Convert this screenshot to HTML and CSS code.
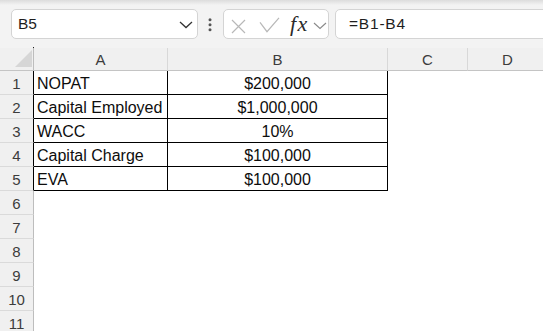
FILE: index.html
```html
<!DOCTYPE html>
<html>
<head>
<meta charset="utf-8">
<link rel="stylesheet" href="styles.css">
</head>
<body>
<div class="toolbar">
  <div class="namebox">
    <span class="name">B5</span>
    <svg class="chev" width="14" height="8" viewBox="0 0 14 8"><polyline points="1,1 7,6.5 13,1" fill="none" stroke="#333" stroke-width="1.3"/></svg>
  </div>
  <div class="dots">
    <svg width="4" height="14" viewBox="0 0 4 14"><circle cx="2" cy="1.8" r="1.5" fill="#555"/><circle cx="2" cy="6.8" r="1.5" fill="#555"/><circle cx="2" cy="11.7" r="1.5" fill="#555"/></svg>
  </div>
  <div class="fngroup">
    <svg class="ico-x" width="15" height="15" viewBox="0 0 15 15"><path d="M1 1L14 14M14 1L1 14" fill="none" stroke="#b8b8b8" stroke-width="1.2"/></svg>
    <svg class="ico-check" width="21" height="16" viewBox="0 0 21 16"><polyline points="1,5.3 8,14.7 20,0.8" fill="none" stroke="#b8b8b8" stroke-width="1.2"/></svg>
    <span class="fx">fx</span>
    <svg class="ico-chev" width="15" height="8" viewBox="0 0 15 8"><polyline points="1,1 7,6.5 13,1" fill="none" stroke="#8a8a8a" stroke-width="1.1"/></svg>
  </div>
  <div class="formula">=B1-B4</div>
  <span class="tick"></span>
</div>
<div class="sheet">
  <div class="row head">
    <div class="corner"><svg width="33" height="22" viewBox="0 0 33 22"><polygon points="15,19 32,19 32,2" fill="#d6d6d6"/></svg></div>
    <div class="hc">A</div>
    <div class="hc">B</div>
    <div class="hc">C</div>
    <div class="hc">D</div>
  </div>
  <div class="row"><div class="rh b">1</div><div class="c">NOPAT</div><div class="c ctr">$200,000</div></div>
  <div class="row"><div class="rh b">2</div><div class="c">Capital Employed</div><div class="c ctr">$1,000,000</div></div>
  <div class="row"><div class="rh b">3</div><div class="c">WACC</div><div class="c ctr">10%</div></div>
  <div class="row"><div class="rh b">4</div><div class="c">Capital Charge</div><div class="c ctr">$100,000</div></div>
  <div class="row"><div class="rh b">5</div><div class="c">EVA</div><div class="c ctr">$100,000</div></div>
  <div class="row"><div class="rh">6</div></div>
  <div class="row"><div class="rh">7</div></div>
  <div class="row"><div class="rh">8</div></div>
  <div class="row"><div class="rh">9</div></div>
  <div class="row"><div class="rh">10</div></div>
  <div class="row"><div class="rh">11</div></div>
</div>
</body>
</html>
```
FILE: styles.css
```css
* { box-sizing: border-box; margin: 0; padding: 0; }
html, body { width: 543px; height: 331px; overflow: hidden; }
body { background: #fff; font-family: "Liberation Sans", Arial, sans-serif; }

.toolbar {
  position: relative;
  width: 543px;
  height: 48px;
  overflow: hidden;
  background: linear-gradient(#dcdcdc 0, #f3f3f3 5px);
  display: flex;
  align-items: flex-start;
  padding: 9px 0 0 11px;
}
.namebox {
  flex: none;
  width: 187px;
  height: 30px;
  background: #fff;
  border: 1px solid #d4d4d4;
  border-radius: 5px;
  display: flex;
  align-items: center;
  padding: 0 4px 0 6px;
}
.name { flex: 1; font-size: 15.5px; line-height: 28px; color: #1e1e1e; }
.chev { display: block; margin-top: 2px; }

.dots { flex: none; width: 25px; padding: 9px 0 0 10px; }
.dots svg { display: block; }

.fngroup {
  flex: none;
  width: 106px;
  height: 30px;
  background: #fff;
  border: 1px solid #d4d4d4;
  border-radius: 5px;
  display: flex;
  align-items: flex-start;
}
.fngroup svg { display: block; flex: none; }
.ico-x { margin: 9px 0 0 7px; }
.ico-check { margin: 7px 0 0 13px; }
.fx {
  flex: none;
  width: 23px;
  margin-left: 10px;
  font-family: "Liberation Serif", "Times New Roman", serif;
  font-style: italic;
  font-size: 22px;
  letter-spacing: 1.5px;
  line-height: 28px;
  color: #2a2a2a;
}
.ico-chev { margin: 12px 0 0 0; }

.formula {
  flex: none;
  width: 230px;
  margin-left: 6px;
  height: 30px;
  background: #fff;
  border: 1px solid #d4d4d4;
  border-radius: 5px;
  padding-left: 13px;
  font-size: 15.5px;
  letter-spacing: 0.8px;
  line-height: 28px;
  color: #1e1e1e;
}
.tick { position: absolute; left: 33px; top: 47px; width: 1px; height: 1px; background: #222; }

.sheet { width: 543px; height: 283px; overflow: hidden; }
.row {
  display: grid;
  grid-template-columns: 34px 134px 220px 80px 80px;
  width: 548px;
  height: 24px;
}
.row.head { height: 23px; }

.corner, .hc {
  background: #f0f0f0;
  border-bottom: 1px solid #c4c4c4;
}
.corner { border-right: 1px solid #bdbdbd; }
.corner svg { display: block; }
.hc {
  border-right: 1px solid #d8d8d8;
  text-align: center;
  font-size: 15px;
  line-height: 21px;
  padding-top: 1px;
  color: #3c3c3c;
}
.rh {
  background: #f0f0f0;
  border-right: 1px solid #bdbdbd;
  border-bottom: 1px solid #dadada;
  text-align: center;
  font-size: 15px;
  line-height: 21px;
  padding-top: 2px;
  color: #3c3c3c;
}
.rh.b { border-right-color: #000; }
.c {
  border-right: 1px solid #000;
  border-bottom: 1px solid #000;
  padding: 2px 0 0 3px;
  font-size: 16px;
  line-height: 21px;
  color: #0d0d0d;
  white-space: nowrap;
}
.c.ctr { text-align: center; padding-left: 0; }
```
